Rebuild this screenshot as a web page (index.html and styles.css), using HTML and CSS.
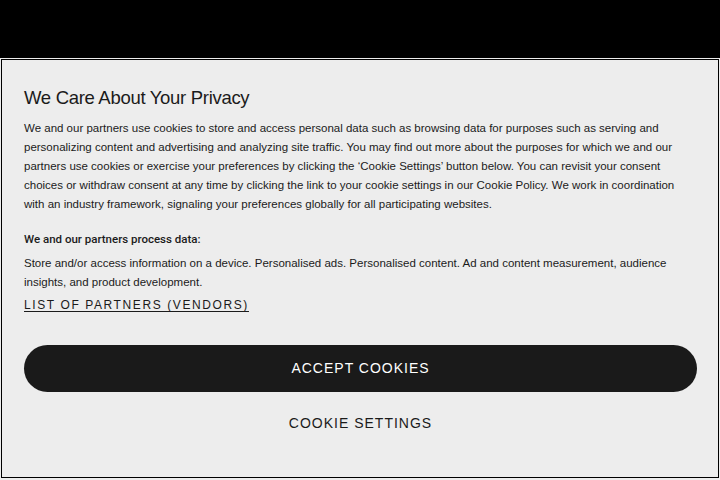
FILE: index.html
```html
<!DOCTYPE html>
<html lang="en">
<head>
<meta charset="utf-8">
<title>We Care About Your Privacy</title>
<link rel="stylesheet" href="styles.css">
</head>
<body>
<div class="backdrop"></div>
<div class="dialog" role="dialog">
  <h2 class="title">We Care About Your Privacy</h2>
  <p class="desc">We and our partners use cookies to store and access personal data such as browsing data for purposes such as serving and personalizing content and advertising and analyzing site traffic. You may find out more about the purposes for which we and our partners use cookies or exercise your preferences by clicking the ‘Cookie Settings’ button below. You can revisit your consent choices or withdraw consent at any time by clicking the link to your cookie settings in our Cookie Policy. We work in coordination with an industry framework, signaling your preferences globally for all participating websites.</p>
  <h3 class="sub">We and our partners process data:</h3>
  <p class="purposes">Store and/or access information on a device. Personalised ads. Personalised content. Ad and content measurement, audience insights, and product development.</p>
  <a class="vendors" href="#">List of Partners (vendors)</a>
  <div class="actions">
    <button class="btn btn-accept">Accept Cookies</button>
    <button class="btn btn-settings">Cookie Settings</button>
  </div>
</div>
</body>
</html>
```
FILE: styles.css
```css
html, body {
  margin: 0;
  padding: 0;
}
body {
  background: #ededed;
  font-family: "Liberation Sans", Arial, sans-serif;
  color: #1b1b1b;
  width: 720px;
  height: 480px;
  overflow: hidden;
}
.backdrop {
  height: 58px;
  background: #000;
}
.dialog {
  margin: 1px 1px 0 1px;
  border: 1px solid #000;
  background: #ededed;
  padding: 24px 21px 0 22px;
  box-sizing: border-box;
  height: 419px;
}
.title {
  margin: 0 0 7px;
  font-size: 18.5px;
  line-height: 28px;
  font-weight: 400;
  letter-spacing: -0.3px;
}
.desc, .purposes {
  margin: 0;
  font-size: 11.5px;
  line-height: 19px;
}
.sub {
  margin: 16px 0 5px;
  font-family: Roboto, "Liberation Sans", sans-serif;
  font-size: 11.5px;
  line-height: 19px;
  font-weight: 500;
}
.vendors {
  display: block;
  margin-top: 4px;
  font-size: 12px;
  line-height: 19px;
  text-transform: uppercase;
  letter-spacing: 1.6px;
  color: #1b1b1b;
  text-decoration: underline;
  text-underline-offset: 2px;
}
.actions {
  margin-top: 30px;
  display: flex;
  flex-direction: column;
  gap: 7px;
}
.btn {
  height: 47px;
  border: 0;
  font-family: inherit;
  font-size: 14px;
  text-transform: uppercase;
  letter-spacing: 1px;
  cursor: pointer;
}
.btn-accept {
  background: #1a1a1a;
  color: #fff;
  border-radius: 24px;
  padding-bottom: 3px;
}
.btn-settings {
  background: transparent;
  color: #1b1b1b;
}
```
